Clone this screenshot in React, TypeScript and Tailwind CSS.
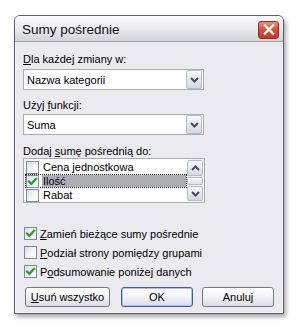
import React from "react";

const F = "font-['Liberation_Sans',Arial,sans-serif]";

function Check({ checked, flat }: { checked?: boolean; flat?: boolean }) {
  return (
    <div
      className={`w-[13px] h-[13px] shrink-0 border ${flat ? "border-[#7f8da3]" : "border-[#7a8aa2]"} bg-gradient-to-br from-[#dcdce4] via-[#f4f4f7] to-white flex items-center justify-center`}
    >
      {checked && (
        <svg width="11" height="11" viewBox="0 0 11 11">
          <path d="M2 5.5 L4.3 7.8 L9 2.8" fill="none" stroke="#21a121" strokeWidth="2.2" strokeLinecap="square" />
        </svg>
      )}
    </div>
  );
}

function Chevron({ up }: { up?: boolean }) {
  return (
    <svg width="9" height="6" viewBox="0 0 9 6">
      <path
        d={up ? "M1 5 L4.5 1.5 L8 5" : "M1 1 L4.5 4.5 L8 1"}
        fill="none"
        stroke="#4a4a58"
        strokeWidth="2"
      />
    </svg>
  );
}

function DropBtn() {
  return (
    <div className="w-[16px] h-[19px] mr-[1px] rounded-[2px] border border-[#b4bccb] bg-gradient-to-b from-[#f7f8fb] to-[#d3d8e2] flex items-center justify-center">
      <Chevron />
    </div>
  );
}

function Dropdown({ text }: { text: string }) {
  return (
    <div className="w-[181px] h-[21px] bg-white border border-[#a7aeb8] flex items-center">
      <span className="flex-1 pl-[3px] text-[11px] leading-[14px] text-black">{text}</span>
      <DropBtn />
    </div>
  );
}

function Btn({ children, w, def }: { children: React.ReactNode; w: string; def?: boolean }) {
  return (
    <div
      className={`${w} h-[20px] rounded-[3px] border ${def ? "border-[#3c5f96] shadow-[inset_0_0_0_1px_#a9c3ea]" : "border-[#707a8c]"} bg-gradient-to-b from-white via-[#f3f3f6] to-[#dcdce4] flex items-center justify-center text-[11px] leading-[14px] text-black`}
    >
      {children}
    </div>
  );
}

export default function App() {
  return (
    <div className={`w-[298px] h-[330px] bg-white pt-[15px] pl-[14px] ${F}`}>
      <div className="w-[270px] h-[299px] flex flex-col rounded-t-[6px] border border-[#5d5d6b] bg-[#ebebef] shadow-[2px_3px_4px_rgba(0,0,0,0.35),inset_0_0_0_1px_#f7f7fa]">
        {/* title bar */}
        <div className="h-[26px] rounded-t-[5px] border-b border-[#a0a0ac] bg-gradient-to-b from-[#fbfbfd] via-[#ebebf0] to-[#d2d2da] flex items-center pl-[7px] pr-[4px] pt-[2px]">
          <span className="flex-1 text-[13.5px] leading-[16px] text-[#111]">Sumy pośrednie</span>
          <div className="w-[21px] h-[18px] rounded-[3px] border border-[#86322a] bg-gradient-to-b from-[#eb8b7f] via-[#d5503f] to-[#c03a2a] flex items-center justify-center">
            <svg width="12" height="11" viewBox="0 0 12 11">
              <path d="M2 1.5 L10 9.5 M10 1.5 L2 9.5" stroke="#fff" strokeWidth="2.3" strokeLinecap="square" />
            </svg>
          </div>
        </div>

        {/* body */}
        <div className="flex flex-col pl-[8px] text-[11px] leading-[14px] text-black">
          <div className="mt-[10px]">
            <span className="underline">D</span>la każdej zmiany w:
          </div>
          <div className="mt-[3px]">
            <Dropdown text="Nazwa kategorii" />
          </div>
          <div className="mt-[8px]">
            Użyj <span className="underline">f</span>unkcji:
          </div>
          <div className="mt-[2px]">
            <Dropdown text="Suma" />
          </div>
          <div className="mt-[9px]">
            Dodaj <span className="underline">s</span>umę pośrednią do:
          </div>
          <div className="w-[182px] h-[45px] bg-white border border-[#a7aeb8] flex">
            <div className="flex-1 flex flex-col pt-[1px] pl-[1px]">
              <div className="h-[14px] flex items-center">
                <div className="ml-[1px]"><Check flat /></div>
                <span className="ml-[4px]">Cena jednostkowa</span>
              </div>
              <div className="h-[14px] flex items-center border border-dotted border-[#222]">
                <Check checked flat />
                <span className="ml-[3px] flex-1 h-full bg-[#adadb6] flex items-center pl-[1px]">Ilość</span>
              </div>
              <div className="h-[14px] flex items-center">
                <div className="ml-[1px]"><Check flat /></div>
                <span className="ml-[4px]">Rabat</span>
              </div>
            </div>
            <div className="w-[17px] flex flex-col py-[1px] pr-[1px] gap-[1px] bg-[#f3f3f6]">
              <div className="h-[16px] rounded-[2px] border border-[#b4bccb] bg-gradient-to-b from-[#f7f8fb] to-[#d3d8e2] flex items-center justify-center">
                <Chevron up />
              </div>
              <div className="h-[9px] rounded-[2px] border border-[#b4bccb] bg-gradient-to-b from-[#fafbfd] to-[#dde1e9]" />
              <div className="h-[15px] rounded-[2px] border border-[#b4bccb] bg-gradient-to-b from-[#f7f8fb] to-[#d3d8e2] flex items-center justify-center">
                <Chevron />
              </div>
            </div>
          </div>

          <div className="mt-[21px] flex flex-col">
            <div className="h-[19px] flex items-center pl-[1px]">
              <Check checked />
              <span className="ml-[3px]"><span className="underline">Z</span>amień bieżące sumy pośrednie</span>
            </div>
            <div className="h-[19px] flex items-center pl-[1px]">
              <Check />
              <span className="ml-[3px]"><span className="underline">P</span>odział strony pomiędzy grupami</span>
            </div>
            <div className="h-[19px] flex items-center pl-[1px]">
              <Check checked />
              <span className="ml-[3px]">P<span className="underline">o</span>dsumowanie poniżej danych</span>
            </div>
          </div>

          <div className="mt-[6px] ml-[2px] flex">
            <Btn w="w-[85px]"><span><span className="underline">U</span>suń wszystko</span></Btn>
            <div className="ml-[11px]"><Btn w="w-[72px]" def>OK</Btn></div>
            <div className="ml-[9px]"><Btn w="w-[72px]">Anuluj</Btn></div>
          </div>
        </div>
      </div>
    </div>
  );
}
